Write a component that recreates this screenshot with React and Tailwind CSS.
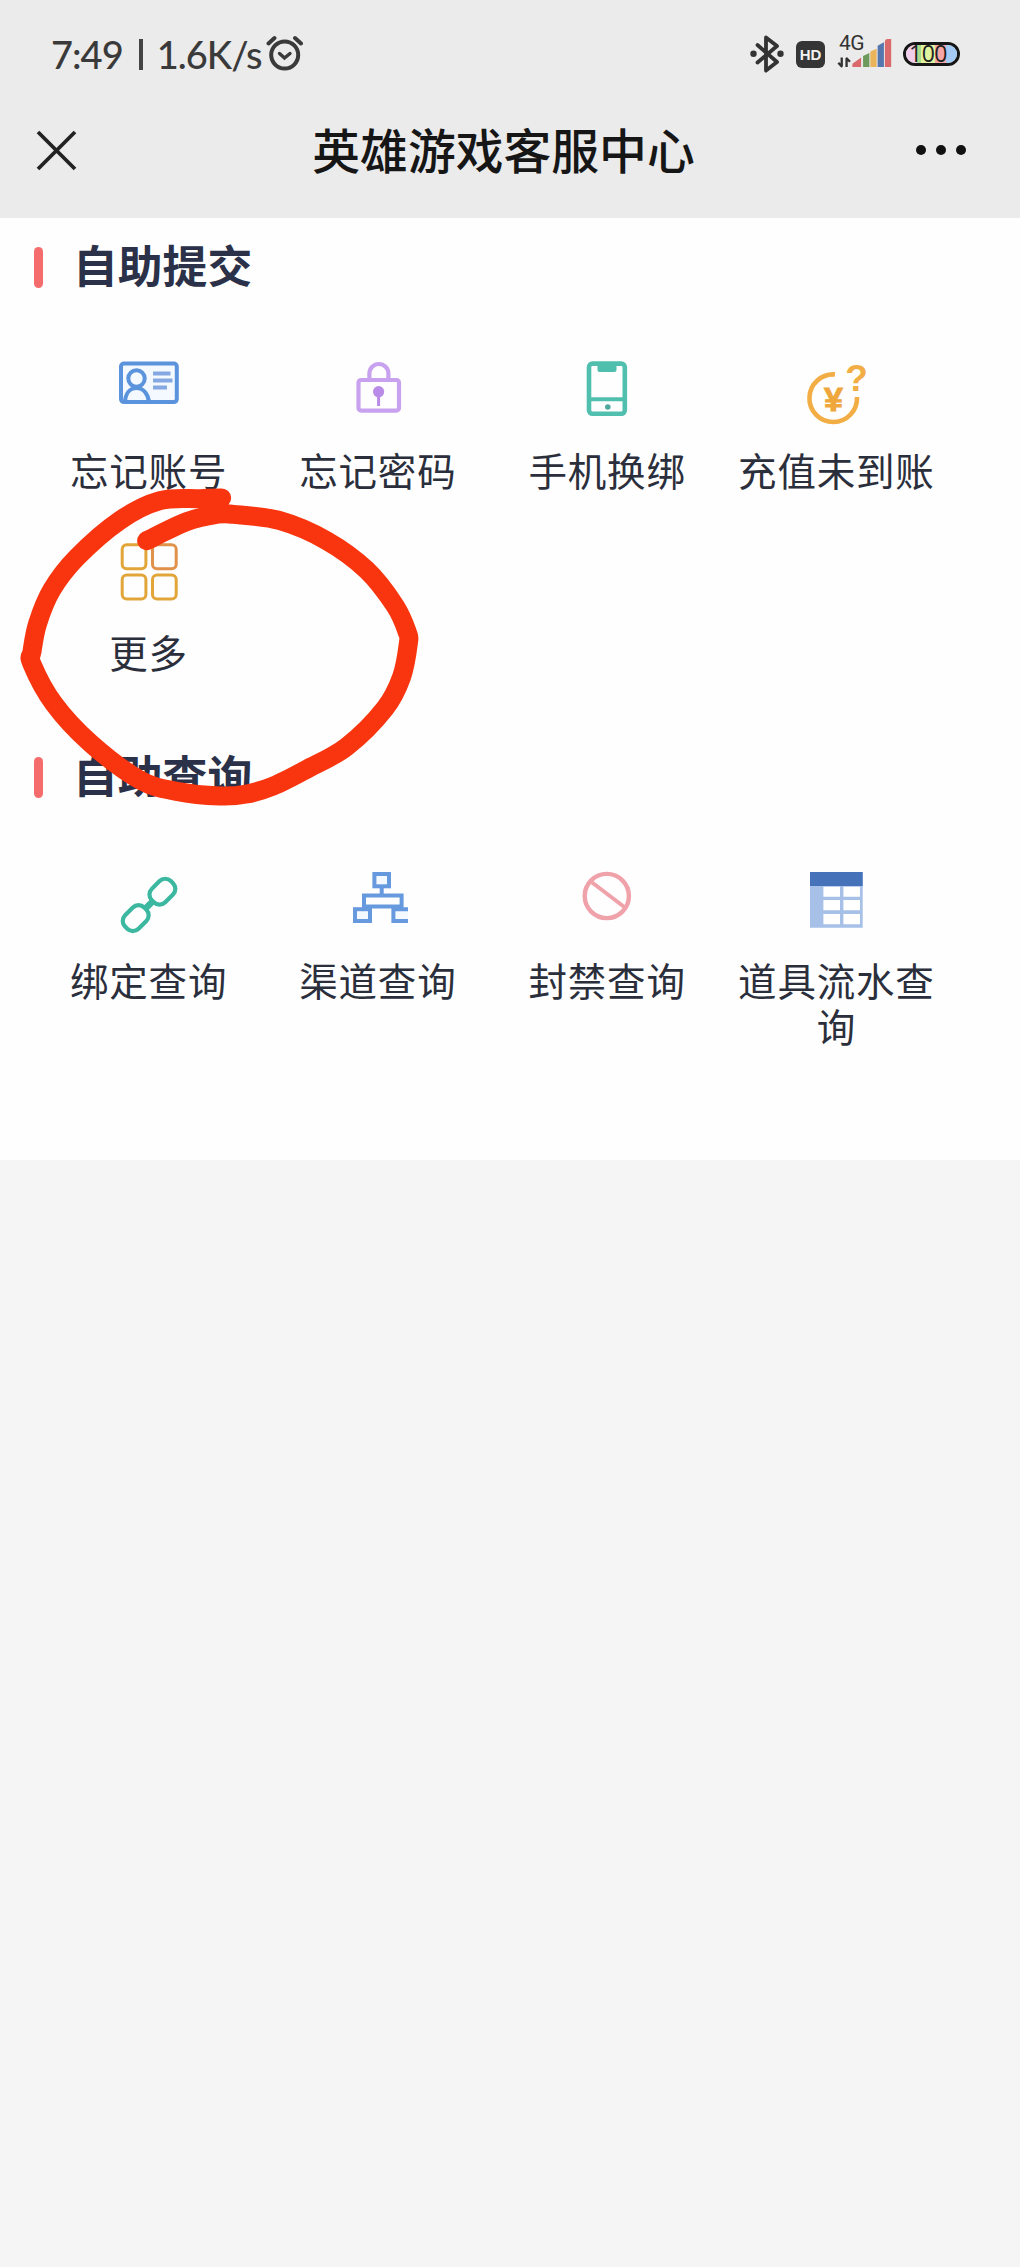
import React from 'react'

function IdCardIcon() {
  return (
    <svg className="w-16 h-16" viewBox="0 0 64 64" fill="none" stroke="#5b93dc" strokeWidth="4">
      <rect x="4" y="5.6" width="55.8" height="38.5" rx="3" fill="#f3f9ff" />
      <circle cx="19.5" cy="20.5" r="8.2" />
      <path d="M8 44C8.500 36 12.500 30 19.500 30S31 36 32 44" />
      <path d="M36 15.500h17.500M36 22.500h19.500M36 29.500h14" stroke="#86a8e2" strokeWidth="4" />
    </svg>
  )
}

function LockIcon() {
  return (
    <svg className="w-16 h-16" viewBox="0 0 64 64" fill="none" stroke="#c8a2ee" strokeWidth="4.200">
      <rect x="12.500" y="22" width="40.500" height="30.600" rx="2.500" />
      <path d="M23.400 21V15.500a9.500 9.500 0 0 1 19 0V21" />
      <circle cx="32.600" cy="33.700" r="5.600" fill="#b98be8" stroke="none" />
      <path d="M32.600 36v12" stroke="#b98be8" strokeWidth="3" />
    </svg>
  )
}

function PhoneIcon() {
  return (
    <svg className="w-16 h-16" viewBox="0 0 64 64" fill="none" stroke="#50bfae" strokeWidth="4.600">
      <rect x="14" y="5.600" width="35.800" height="50.200" rx="3.500" />
      <path d="M15 41.300h35" strokeWidth="4" />
      <path d="M22.500 7.500h19v4.500a2 2 0 0 1-2 2h-15a2 2 0 0 1-2-2z" fill="#50bfae" stroke="none" />
      <circle cx="32.800" cy="49" r="2.800" fill="#50a99c" stroke="none" />
    </svg>
  )
}

function RechargeIcon() {
  return (
    <svg className="w-16 h-16 overflow-visible" viewBox="0 0 64 64" fill="none" stroke="#f2ae45" strokeWidth="4.600">
      <path d="M31 16.500A23.800 23.800 0 1 0 53 39" />
      <text x="29.500" y="53" textAnchor="middle" fill="#efa73c" stroke="#efa73c" strokeWidth="1" className="font-['Liberation_Sans'] text-[34px] font-bold">¥</text>
      <text x="52.500" y="33" textAnchor="middle" fill="#f2ae45" stroke="none" className="font-['Liberation_Sans'] text-[37px] font-bold">?</text>
    </svg>
  )
}

function MoreIcon() {
  return (
    <svg className="w-16 h-16" viewBox="0 0 64 64" fill="none" stroke="#e2a53a" strokeWidth="3">
      <rect x="5.200" y="4.700" width="23.700" height="24" rx="4.500" />
      <rect x="35.500" y="4.700" width="23.700" height="24" rx="4.500" stroke="#e0914a" />
      <rect x="5.200" y="35" width="23.700" height="24" rx="4.500" />
      <rect x="35.500" y="35" width="23.700" height="24" rx="4.500" />
    </svg>
  )
}

function ChainIcon() {
  return (
    <svg className="w-16 h-16 overflow-visible" viewBox="0 0 64 64" fill="none" stroke="#3cb8a0" strokeWidth="4.200">
      <rect x="31.900" y="14.200" width="27" height="19" rx="8" transform="rotate(-45 45.400 23.700)" />
      <rect x="5.200" y="40.600" width="27" height="19" rx="8" transform="rotate(-45 18.700 50.100)" />
      <path d="M28.500 40.500l7-7" strokeWidth="6.500" />
    </svg>
  )
}

function ChannelIcon() {
  return (
    <svg className="w-16 h-16" viewBox="0 0 64 64" fill="none" stroke="#6699dd" strokeWidth="4">
      <rect x="28.400" y="6" width="14.600" height="12.300" fill="#f3f9ff" />
      <path d="M35.700 19v8" />
      <path d="M18 40V27.400h37.600V40" />
      <path d="M18 38.500h37.600" />
      <rect x="9" y="41.200" width="15" height="11.800" fill="#f3f9ff" />
      <path d="M62 41.200H47.400V53H62" fill="#f3f9ff" />
    </svg>
  )
}

function BanIcon() {
  return (
    <svg className="w-16 h-16" viewBox="0 0 64 64" fill="none" stroke="#f0a2aa" strokeWidth="4.400">
      <circle cx="31.800" cy="28" r="22.100" />
      <path d="M15.800 13.500l33.500 25.500" strokeWidth="4" />
    </svg>
  )
}

function TableIcon() {
  return (
    <svg className="w-16 h-16" viewBox="0 0 64 64">
      <path d="M6 4h52.700v55.700H6z" fill="#a6c0e8" />
      <path d="M6 4h52.700v14H6z" fill="#4672ba" />
      <path
        d="M19.400 18.700H36v10H19.400zM39.400 18.700H56v10H39.400zM19.400 32H36v10.300H19.400zM39.400 32H56v10.300H39.400zM19.400 46H36v10.300H19.400zM39.400 46H56v10.300H39.400z"
        fill="#fff"
      />
    </svg>
  )
}

const submitItems = [
  { label: '忘记账号', Icon: IdCardIcon },
  { label: '忘记密码', Icon: LockIcon },
  { label: '手机换绑', Icon: PhoneIcon },
  { label: '充值未到账', Icon: RechargeIcon },
  { label: '更多', Icon: MoreIcon },
]

const queryItems = [
  { label: '绑定查询', Icon: ChainIcon },
  { label: '渠道查询', Icon: ChannelIcon },
  { label: '封禁查询', Icon: BanIcon },
  { label: '道具流水查询', Icon: TableIcon },
]

const markerPoints = [
  [665, 84], [600, 86], [480, 92], [360, 151], [230, 263], [155, 360], [113, 460], [96, 545],
  [95, 580], [161, 700], [272, 820], [420, 930], [530, 964], [660, 978], [740, 972], [820, 948],
  [920, 898], [1040, 830], [1155, 715], [1205, 620], [1225, 520], [1222, 487], [1185, 407],
  [1100, 300], [980, 212], [840, 152], [700, 133], [650, 133], [560, 155], [440, 212],
]

// smooth curve through all the points
function smoothPath(points) {
  let d = `M${points[0].join(' ')}`
  for (let i = 0; i < points.length - 1; i++) {
    const p0 = points[i - 1] || points[i]
    const p1 = points[i]
    const p2 = points[i + 1]
    const p3 = points[i + 2] || p2
    d += `C${p1[0] + (p2[0] - p0[0]) / 6} ${p1[1] + (p2[1] - p0[1]) / 6} ${p2[0] - (p3[0] - p1[0]) / 6} ${p2[1] - (p3[1] - p1[1]) / 6} ${p2[0]} ${p2[1]}`
  }
  return d
}

function StatusBar() {
  return (
    <div className="flex items-center h-[108px] pl-[51px] pr-[60px] text-[#3a3a3a]">
      <div className="flex items-center font-['Lato'] text-[38px] leading-none font-medium tracking-[-1px]">
        <span>7:49</span>
        <span className="w-[4px] h-[31px] bg-[#444] ml-[16px] mr-[14px]" />
        <span>1.6K/s</span>
        <svg className="w-[38px] h-[36px] ml-[4px] -mt-[2px]" viewBox="0 0 38 36" fill="none" stroke="#3a3a3a" strokeWidth="4" strokeLinecap="round">
          <circle cx="18.700" cy="20" r="13.500" />
          <path d="M2.500 8.500L8.500 3M35 8.500L29 3" />
          <path d="M13.500 18.500l5 4.500 5.500-4.500" strokeWidth="3.400" />
        </svg>
      </div>

      <div className="flex items-center ml-auto">
        <svg className="w-[34px] h-[38px]" viewBox="0 0 34 38" fill="none" stroke="#333" strokeWidth="3.800" strokeLinejoin="round" strokeLinecap="round">
          <path d="M7.500 10l19.500 17-11 8.500V2.500L27 11 7.500 27.500" />
          <circle cx="3.500" cy="18.700" r="3.200" fill="#333" stroke="none" />
          <circle cx="30.500" cy="18.700" r="3.200" fill="#333" stroke="none" />
        </svg>
        <span className="flex items-center justify-center w-[29px] h-[27px] ml-[12px] rounded-[6px] bg-[#353535] text-[#f2f2f2] font-['Liberation_Sans'] text-[15px] leading-none font-bold">HD</span>
        <div className="flex flex-col w-[58px] h-[38px] ml-[11px] -mt-[6px]">
          <span className="relative z-10 pl-[3px] h-[19px] text-[#333] font-['Roboto'] text-[21px] leading-[22px] tracking-[-0.5px]">4G</span>
          <svg className="w-[58px] h-[33px] -mt-[13px]" viewBox="0 3 58 33">
            <path d="M5 23v9.500M5.500 33l-4-4.500M10 33v-9.500M9.500 23.500l4 4" fill="none" stroke="#333" strokeWidth="2.400" />
            <path d="M16 33v-3.500l9-6.500V33z" fill="#d9696b" />
            <path d="M27 33V21.500l6.500-3V33z" fill="#6f9a5e" />
            <path d="M34.500 33V17l6.500-3V33z" fill="#eab45a" />
            <path d="M42 33V11l6.500-3.500V33z" fill="#5677ae" />
            <path d="M49.500 33V7q0-3 3-3h3.500V33z" fill="#d9696b" />
          </svg>
        </div>
        <div className="relative w-[57px] h-[24px] ml-[9px]">
          <div className="flex h-full rounded-full border-[3px] border-[#161616] overflow-hidden">
            <span className="w-[11px] bg-[#f0cdea]" />
            <span className="w-[4px] bg-[#a8dc8c]" />
            <span className="w-[14px] bg-[#e0f4a0]" />
            <span className="w-[11px] bg-[#f7a6a6]" />
            <span className="flex-1 bg-[#a4cbf5]" />
          </div>
          <span className="absolute left-[6px] -top-px text-[#222] font-['Open_Sans'] text-[23px] leading-[24px] tracking-[-0.5px]">100</span>
        </div>
      </div>
    </div>
  )
}

function NavBar() {
  return (
    <div className="flex items-center justify-between h-[84px] pl-[36px] pr-[54px]">
      <svg className="w-[41px] h-[41px]" viewBox="0 0 41 41" fill="none" stroke="#222" strokeWidth="3.800">
        <path d="M2 2l37 37M39 2L2 39" />
      </svg>
      <h1 className="ml-[14px] -mt-[3px] text-[47.800px] leading-none font-medium text-[#161616]">英雄游戏客服中心</h1>
      <div className="flex gap-[10px]">
        <span className="w-[10px] h-[10px] rounded-full bg-[#111]" />
        <span className="w-[10px] h-[10px] rounded-full bg-[#111]" />
        <span className="w-[10px] h-[10px] rounded-full bg-[#111]" />
      </div>
    </div>
  )
}

function Section({ title, items }) {
  return (
    <section>
      <div className="flex items-center h-[96px] pl-[34px]">
        <span className="w-[9px] h-[41px] mt-[3px] rounded-full bg-[#f56c6c]" />
        <h2 className="ml-[30px] -mt-[4px] text-[44.800px] leading-none font-bold text-[#2b3148]">{title}</h2>
      </div>
      <div className="grid grid-cols-4 gap-y-[46px] w-[917px] ml-[34px] mt-[44px]">
        {items.map(({ label, Icon }) => (
          <div key={label} className="flex flex-col items-center">
            <Icon />
            <p className="mt-[24px] mb-[2px] text-[38.500px] leading-[46px] tracking-[0.8px] text-center text-[#2b2f3c]">{label}</p>
          </div>
        ))}
      </div>
    </section>
  )
}

export default function App() {
  return (
    <div className="relative w-full min-h-[2267px] bg-[#f5f5f5] font-['Noto_Sans_CJK_SC',sans-serif]">
      <header className="h-[218px] bg-[#ebebeb]">
        <StatusBar />
        <NavBar />
      </header>

      <main className="h-[942px] bg-[#fefefe] flex flex-col gap-[52px]">
        <Section title="自助提交" items={submitItems} />
        <Section title="自助查询" items={queryItems} />
      </main>

      {/* red marker circle over the "more" entry */}
      <svg className="absolute left-0 top-[470px] w-[440px] h-[350px] pointer-events-none" viewBox="0 0 1320 1050" fill="none">
        <path d={smoothPath(markerPoints)} stroke="#f8350e" strokeWidth="57" strokeLinecap="round" strokeLinejoin="round" />
      </svg>
    </div>
  )
}
